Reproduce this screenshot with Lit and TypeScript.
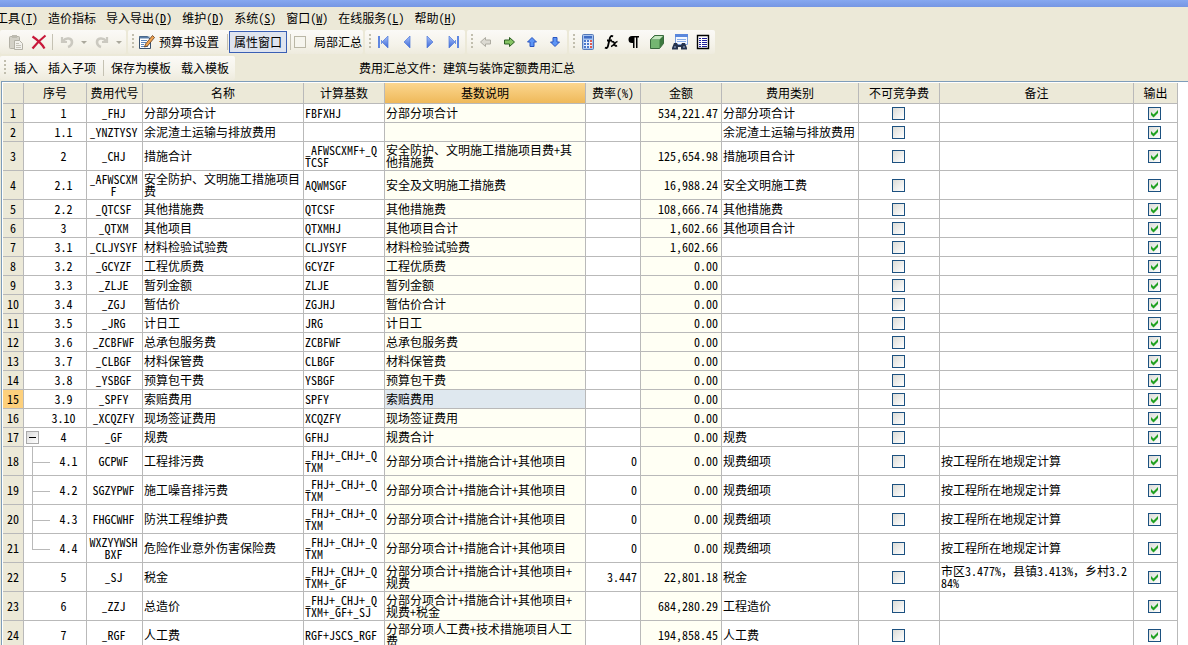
import { LitElement, html, svg, css, nothing } from "lit";
import { customElement } from "lit/decorators.js";
import { classMap } from "lit/directives/class-map.js";

interface Row {
  no: string;
  code: string;
  name: string;
  base?: string;
  desc?: string;
  rate?: string;
  amount?: string;
  kind?: string;
  remark?: string;
  tree?: "open" | "child" | "last";
}

const LOCAL = "按工程所在地规定计算";
const SUM = "分部分项合计+措施合计+其他项目";
const SUM_CODE = "_FHJ+_CHJ+_QTXM";

const ROWS: Row[] = [
  { no: "1", code: "_FHJ", name: "分部分项合计", base: "FBFXHJ", desc: "分部分项合计", amount: "534,221.47", kind: "分部分项合计" },
  { no: "1.1", code: "_YNZTYSY", name: "余泥渣土运输与排放费用", kind: "余泥渣土运输与排放费用" },
  { no: "2", code: "_CHJ", name: "措施合计", base: "_AFWSCXMF+_QTCSF", desc: "安全防护、文明施工措施项目费+其他措施费", amount: "125,654.98", kind: "措施项目合计" },
  { no: "2.1", code: "_AFWSCXMF", name: "安全防护、文明施工措施项目费", base: "AQWMSGF", desc: "安全及文明施工措施费", amount: "16,988.24", kind: "安全文明施工费" },
  { no: "2.2", code: "_QTCSF", name: "其他措施费", base: "QTCSF", desc: "其他措施费", amount: "108,666.74", kind: "其他措施费" },
  { no: "3", code: "_QTXM", name: "其他项目", base: "QTXMHJ", desc: "其他项目合计", amount: "1,602.66", kind: "其他项目合计" },
  { no: "3.1", code: "_CLJYSYF", name: "材料检验试验费", base: "CLJYSYF", desc: "材料检验试验费", amount: "1,602.66" },
  { no: "3.2", code: "_GCYZF", name: "工程优质费", base: "GCYZF", desc: "工程优质费", amount: "0.00" },
  { no: "3.3", code: "_ZLJE", name: "暂列金额", base: "ZLJE", desc: "暂列金额", amount: "0.00" },
  { no: "3.4", code: "_ZGJ", name: "暂估价", base: "ZGJHJ", desc: "暂估价合计", amount: "0.00" },
  { no: "3.5", code: "_JRG", name: "计日工", base: "JRG", desc: "计日工", amount: "0.00" },
  { no: "3.6", code: "_ZCBFWF", name: "总承包服务费", base: "ZCBFWF", desc: "总承包服务费", amount: "0.00" },
  { no: "3.7", code: "_CLBGF", name: "材料保管费", base: "CLBGF", desc: "材料保管费", amount: "0.00" },
  { no: "3.8", code: "_YSBGF", name: "预算包干费", base: "YSBGF", desc: "预算包干费", amount: "0.00" },
  { no: "3.9", code: "_SPFY", name: "索赔费用", base: "SPFY", desc: "索赔费用", amount: "0.00" },
  { no: "3.10", code: "_XCQZFY", name: "现场签证费用", base: "XCQZFY", desc: "现场签证费用", amount: "0.00" },
  { no: "4", code: "_GF", name: "规费", base: "GFHJ", desc: "规费合计", amount: "0.00", kind: "规费", tree: "open" },
  { no: "4.1", code: "GCPWF", name: "工程排污费", base: SUM_CODE, desc: SUM, rate: "0", amount: "0.00", kind: "规费细项", remark: LOCAL, tree: "child" },
  { no: "4.2", code: "SGZYPWF", name: "施工噪音排污费", base: SUM_CODE, desc: SUM, rate: "0", amount: "0.00", kind: "规费细项", remark: LOCAL, tree: "child" },
  { no: "4.3", code: "FHGCWHF", name: "防洪工程维护费", base: SUM_CODE, desc: SUM, rate: "0", amount: "0.00", kind: "规费细项", remark: LOCAL, tree: "child" },
  { no: "4.4", code: "WXZYYWSHBXF", name: "危险作业意外伤害保险费", base: SUM_CODE, desc: SUM, rate: "0", amount: "0.00", kind: "规费细项", remark: LOCAL, tree: "last" },
  { no: "5", code: "_SJ", name: "税金", base: SUM_CODE + "+_GF", desc: SUM + "+规费", rate: "3.447", amount: "22,801.18", kind: "税金", remark: "市区3.477%，县镇3.413%，乡村3.284%" },
  { no: "6", code: "_ZZJ", name: "总造价", base: SUM_CODE + "+_GF+_SJ", desc: SUM + "+规费+税金", amount: "684,280.29", kind: "工程造价" },
  { no: "7", code: "_RGF", name: "人工费", base: "RGF+JSCS_RGF", desc: "分部分项人工费+技术措施项目人工费", amount: "194,858.45", kind: "人工费" },
];

const CURRENT = 14;

const HEADS = ["", "序号", "费用代号", "名称", "计算基数", "基数说明", "费率(%)", "金额", "费用类别", "不可竞争费", "备注", "输出"];

const MENUS: [string, string?][] = [
  ["工具", "T"],
  ["造价指标"],
  ["导入导出", "D"],
  ["维护", "D"],
  ["系统", "S"],
  ["窗口", "W"],
  ["在线服务", "L"],
  ["帮助", "H"],
];

const triLeft = (x: number) => svg`<path d="M${x + 6} 2v12l-6-6z" fill="url(#nv)" stroke="#4f78d8" stroke-width=".7"/>`;
const triRight = (x: number) => svg`<path d="M${x} 2v12l6-6z" fill="url(#nv)" stroke="#4f78d8" stroke-width=".7"/>`;
const navFill = svg`<defs><linearGradient id="nv" x1="0" y1="0" x2="0" y2="1"><stop offset="0" stop-color="#a9c3fb"/><stop offset="1" stop-color="#3b66d6"/></linearGradient></defs>`;

const ICONS = {
  paste: svg`<rect x="1.500" y="2.500" width="10" height="12" rx="1" fill="#d3d1c7" stroke="#b3b1a6"/><rect x="4" y="1" width="5" height="3" fill="#bdbbb0"/><path d="M6.500 6.500h5l3 3v6h-8z" fill="#f2f1ec" stroke="#b3b1a6"/><path d="M8 9.500h3M8 11.500h5M8 13.500h5" stroke="#c4c2b8"/>`,
  remove: svg`<path d="M1.500 2.500C6 5.500 11 10 13.500 14.500M14.500 1.500C10 5 5 10 1.500 14.500" fill="none" stroke="#c8183a" stroke-width="2.200"/>`,
  undo: svg`<path d="M3 3v5h5" fill="none" stroke="#cbc9c0" stroke-width="2.200"/><path d="M4 7c3-4 9-3 9 1 0 2-1 4-4 5" fill="none" stroke="#cbc9c0" stroke-width="2.600"/>`,
  redo: svg`<path d="M13 3v5H8" fill="none" stroke="#cbc9c0" stroke-width="2.200"/><path d="M12 7C9 3 3 4 3 8c0 2 1 4 4 5" fill="none" stroke="#cbc9c0" stroke-width="2.600"/>`,
  edit: svg`<path d="M.5 2.500h8l3 3v9H.5z" fill="#fff" stroke="#39526f"/><path d="M.5 2.500h10v2H.5z" fill="#5b7ea8"/><path d="M2 6.500h6M2 8.500h5M2 10.500h3M2 12.500h7" stroke="#5d86bd"/><path d="M13.500 1.500l2 2-7 8.500-3 1 1-3z" fill="#f0a350" stroke="#5d371a" stroke-width=".8"/>`,
  first: svg`${navFill}<path d="M2 2h2v12H2z" fill="#5f86e0"/><path d="M12 2v12L6 8z" fill="url(#nv)" stroke="#4f78d8" stroke-width=".7"/><path d="M5 6h1v4H5z" fill="#6f94e6"/>`,
  prev: svg`${navFill}${triLeft(5)}`,
  next: svg`${navFill}${triRight(5)}`,
  last: svg`${navFill}<path d="M4 2v12l6-6z" fill="url(#nv)" stroke="#4f78d8" stroke-width=".7"/><path d="M10 6h1v4h-1z" fill="#6f94e6"/><path d="M12 2h2v12h-2z" fill="#5f86e0"/>`,
  left: svg`<path d="M2.500 8l5-4.500V6h5v4h-5v2.500z" fill="#dcdad2" stroke="#aeaca2"/>`,
  right: svg`<path d="M13.500 8l-5-4.500V6h-5v4h5v2.500z" fill="#86c464" stroke="#2b5d22"/>`,
  up: svg`<path d="M8 3.500L3.500 8H6v4.500h4V8h2.500z" fill="#5d95f5" stroke="#2a55c0"/>`,
  down: svg`<path d="M8 12.500L3.500 8H6V3.500h4V8h2.500z" fill="#5d95f5" stroke="#2a55c0"/>`,
  calc: svg`<rect x="2.500" y=".5" width="11" height="15" rx="1" fill="#a9c4ee" stroke="#5579b8"/><rect x="4" y="2" width="8" height="2.500" fill="#3f6cc4"/><path d="M4 6h8v8H4z" fill="#e9f0fc"/><path d="M4 6h2v2H4zM7 6h2v2H7zM4 9h2v2H4zM7 9h2v2H7zM4 12h2v2H4zM7 12h2v2H7z" fill="#4b78cc"/><path d="M10 6h2v2h-2zM10 9h2v2h-2zM10 12h2v2h-2z" fill="#e05a50"/>`,
  fx: svg`<path d="M10 2.500C8 1 7 3 6.500 5.500L5 12c-.5 2-1.500 2.500-3 1.500M4 6.500h5" fill="none" stroke="#000" stroke-width="1.800"/><path d="M8.500 8c2-1 2.500 0 3 2s1 2.500 2.500 1.500M14.500 7.500C12 7.500 11 12 8 12.500" fill="none" stroke="#000" stroke-width="1.600"/>`,
  para: svg`<path d="M13 2H6a3.500 3.500 0 0 0 0 7h1v5h1.500V3.500H10V14h1.500V3.500H13z" fill="#000"/>`,
  cube: svg`<path d="M1.500 5.500l4-4h9v8l-4 5h-9z" fill="#3d7a3f" stroke="#3a6b3d"/><path d="M2 5.500l4-3.500h8l-3.500 3.500z" fill="#c4e6bd"/><path d="M2 6h8.500v8H2z" fill="#74b671"/>`,
  find: svg`<path d="M3.500.5h12v10h-12z" fill="#f4f8ff" stroke="#7d9fdc"/><path d="M3 0h13v3H3z" fill="#5a87dc"/><path d="M5 5.500h9M5 7.500h9" stroke="#88aeea"/><path d="M0 14l2-5h3l1 2h3l1-2h3l2 5v1.500h-6V13H6v2.500H0z" fill="#26344e"/><path d="M2 13h2M11 13h2" stroke="#9db4da"/>`,
  list: svg`<path d="M2.500 1.500h11v13h-11z" fill="#fff" stroke="#000" stroke-width="1.400"/><path d="M4 4.500h2M4 6.500h2M4 8.500h2M4 10.500h2M4 12.500h2M7 4.500h5M7 6.500h5M7 8.500h5M7 10.500h5M7 12.500h5" stroke="#20209c"/>`,
};

const TITLES: Record<string, string> = {
  paste: "粘贴", remove: "删除", undo: "撤销", redo: "恢复", first: "首行", prev: "上一行", next: "下一行", last: "末行",
  left: "升级", right: "降级", up: "上移", down: "下移", calc: "计算器", fx: "函数", para: "段落", cube: "图块", find: "查找", list: "列表",
};

@customElement("app-root")
export class AppRoot extends LitElement {
  static styles = css`
    :host {
      display: flex;
      flex-direction: column;
      height: 100vh;
      overflow: hidden;
      background: #ece9d8;
      color: #000;
      font: 12px/12px "Noto Sans Mono CJK SC", "Noto Sans CJK SC", monospace;
      text-spacing-trim: space-all;
    }
    * { box-sizing: border-box; }
    button {
      font: inherit;
      color: inherit;
      background: none;
      border: 0;
      padding: 0;
      margin: 0;
      white-space: nowrap;
    }
    .title { flex: none; height: 7px; background: linear-gradient(#86a8f0, #7596e3); }
    .menu { flex: none; display: flex; gap: 10px; height: 22px; margin-left: -4px; }
    .bar { flex: none; display: flex; align-items: center; height: 26px; }
    .group {
      display: flex;
      align-items: center;
      height: 24px;
      margin-right: 2px;
      padding: 0 1px 0 4px;
      border-radius: 2px;
      background: linear-gradient(#fbfaf7, #f5f3ea 60%, #eeebde);
    }
    .grip {
      flex: none;
      width: 2px;
      height: 16px;
      margin-right: 1px;
      background: repeating-linear-gradient(#c1beae 0 2px, transparent 2px 4px);
    }
    .grip + .text { margin-left: 2px; }
    .sep { flex: none; width: 1px; height: 16px; background: #c5c2b3; }
    .wide { margin: 0 2px; }
    .tool { display: flex; align-items: center; justify-content: center; width: 23px; height: 22px; }
    .tool svg, .labelled svg { width: 16px; height: 16px; flex: none; }
    .drop { width: 12px; height: 22px; display: grid; place-items: center; }
    .drop::before { content: ""; border: 3px solid transparent; border-top-color: #aaa89c; border-bottom: 0; }
    .labelled { display: flex; align-items: center; gap: 4px; height: 22px; padding: 0 8px 0 4px; }
    .pressed { height: 22px; padding: 0 4px; border: 1px solid #3a5fb4; background: #dfe4ef; margin: 0 3px 0 1px; }
    .check { display: flex; align-items: center; gap: 8px; padding: 0 0 0 3px; }
    .text { height: 22px; padding: 0 5px; }
    .file { margin-left: 122px; }
    input {
      appearance: none;
      display: block;
      flex: none;
      width: 13px;
      height: 13px;
      margin: 0 auto;
      border: 1px solid #1c5180;
      background: linear-gradient(135deg, #dcdcd7, #fff);
    }
    .check input { width: 12px; height: 12px; margin: 0; border-color: #bab7a6; background: #f6f5ee; }
    td input:checked {
      background:
        url("data:image/svg+xml,%3Csvg xmlns='http://www.w3.org/2000/svg' viewBox='0 0 11 11'%3E%3Cpath d='M2 4v3l2.500 2.500L9 5V2L4.500 6.500z' fill='%2321a121'/%3E%3C/svg%3E"),
        linear-gradient(135deg, #dcdcd7, #fff);
    }
    .sheet {
      flex: 1;
      min-height: 0;
      overflow: hidden;
      margin-left: 1px;
      padding: 1px 10px 0 1px;
      border-top: 1px solid #7f9db9;
      border-left: 1px solid #7f9db9;
      background: #fff;
    }
    table { width: 100%; table-layout: fixed; border-collapse: separate; border-spacing: 0; }
    th, td { border: solid #b9b9b9; border-width: 0 1px 1px 0; padding: 0 3px 0 1px; }
    th { height: 21px; padding: 0 1px; font-weight: normal; background: #ece9d8; text-align: center; white-space: nowrap; }
    th.active { background: linear-gradient(#fbd68f, #efb95a); }
    td { height: 19px; word-break: break-all; line-break: anywhere; vertical-align: middle; }
    .tall td, .tall th { height: 29px; }
    tbody th { height: 19px; padding: 0; }
    tbody th.current { background: #fdd07c; }
    .mid { text-align: center; }
    .num { text-align: right; }
    .calc { background: #fffff4; }
    .picked { background: #dfe8ef; }
    .seq { position: relative; text-align: center; padding-left: 20px; }
    .child, .last { padding-left: 30px; }
    .child::before, .last::before {
      content: "";
      position: absolute;
      left: 8px;
      top: -1px;
      width: 17px;
      height: 16px;
      border: solid #b9b9b9;
      border-width: 0 0 1px 1px;
    }
    .child::after { content: ""; position: absolute; left: 8px; top: 14px; bottom: -1px; border-left: 1px solid #b9b9b9; }
    .toggle {
      position: absolute;
      left: 2px;
      top: 3px;
      width: 13px;
      height: 13px;
      border: 1px solid #aaa;
      background: linear-gradient(#000, #000) center / 7px 1px no-repeat, linear-gradient(135deg, #dcdcdc, #fff);
    }
    .w0 { width: 21px; } .w1 { width: 63px; } .w2 { width: 56px; } .w3 { width: 161px; }
    .w4 { width: 81px; } .w5 { width: 201px; } .w6 { width: 55px; } .w7 { width: 81px; }
    .w8 { width: 137px; } .w9 { width: 81px; } .w11 { width: 44px; }
  `;

  private icon(name: keyof typeof ICONS) {
    return html`<svg viewBox="0 0 16 16" aria-hidden="true">${ICONS[name]}</svg>`;
  }

  private tool(name: keyof typeof ICONS) {
    return html`<button class="tool" title=${TITLES[name]} aria-label=${TITLES[name]}>${this.icon(name)}</button>`;
  }

  private row(r: Row, i: number) {
    const tall = (r.base ?? "").length > 11 || r.code.length > 8;
    return html`<tr class=${tall ? "tall" : ""}>
      <th scope="row" class=${classMap({ current: i === CURRENT })}>${i + 1}</th>
      <td class="seq ${r.tree ?? ""}">${r.tree === "open"
        ? html`<button class="toggle" aria-label="折叠"></button>`
        : nothing}${r.no}</td>
      <td class="mid">${r.code}</td>
      <td>${r.name}</td>
      <td>${r.base}</td>
      <td class=${i === CURRENT ? "picked" : "calc"}>${r.desc}</td>
      <td class="num">${r.rate}</td>
      <td class="num calc">${r.amount}</td>
      <td>${r.kind}</td>
      <td><input type="checkbox" aria-label="不可竞争费" /></td>
      <td>${r.remark}</td>
      <td><input type="checkbox" aria-label="输出" checked /></td>
    </tr>`;
  }

  render() {
    return html`
      <div class="title"></div>
      <nav class="menu">
        ${MENUS.map(([label, key]) => html`<button>${label}${key ? html`(<u>${key}</u>)` : nothing}</button>`)}
      </nav>
      <div class="bar">
        <div class="group">
          ${this.tool("paste")}${this.tool("remove")}
          <span class="sep wide"></span>
          ${this.tool("undo")}<button class="drop" aria-label="撤销列表"></button>
          ${this.tool("redo")}<button class="drop" aria-label="恢复列表"></button>
        </div>
        <div class="group">
          <span class="grip"></span>
          <button class="labelled">${this.icon("edit")}预算书设置</button>
          <span class="sep"></span>
          <button class="pressed">属性窗口</button>
          <span class="sep"></span>
          <label class="check"><input type="checkbox" />局部汇总</label>
        </div>
        <div class="group">
          <span class="grip"></span>
          ${this.tool("first")}${this.tool("prev")}${this.tool("next")}${this.tool("last")}
        </div>
        <div class="group">
          <span class="grip"></span>
          ${this.tool("left")}${this.tool("right")}${this.tool("up")}${this.tool("down")}
        </div>
        <div class="group">
          <span class="grip"></span>
          ${this.tool("calc")}${this.tool("fx")}${this.tool("para")}${this.tool("cube")}${this.tool("find")}${this.tool("list")}
        </div>
      </div>
      <div class="bar">
        <div class="group">
          <span class="grip"></span>
          <button class="text">插入</button>
          <button class="text">插入子项</button>
          <span class="sep wide"></span>
          <button class="text">保存为模板</button>
          <button class="text">载入模板</button>
        </div>
        <span class="file">费用汇总文件：建筑与装饰定额费用汇总</span>
      </div>
      <main class="sheet">
        <table>
          <colgroup>${HEADS.map((_, i) => html`<col class="w${i}" />`)}</colgroup>
          <thead>
            <tr>${HEADS.map((h, i) => html`<th scope="col" class=${classMap({ active: i === 5 })}>${h}</th>`)}</tr>
          </thead>
          <tbody>${ROWS.map((r, i) => this.row(r, i))}</tbody>
        </table>
      </main>
    `;
  }
}
